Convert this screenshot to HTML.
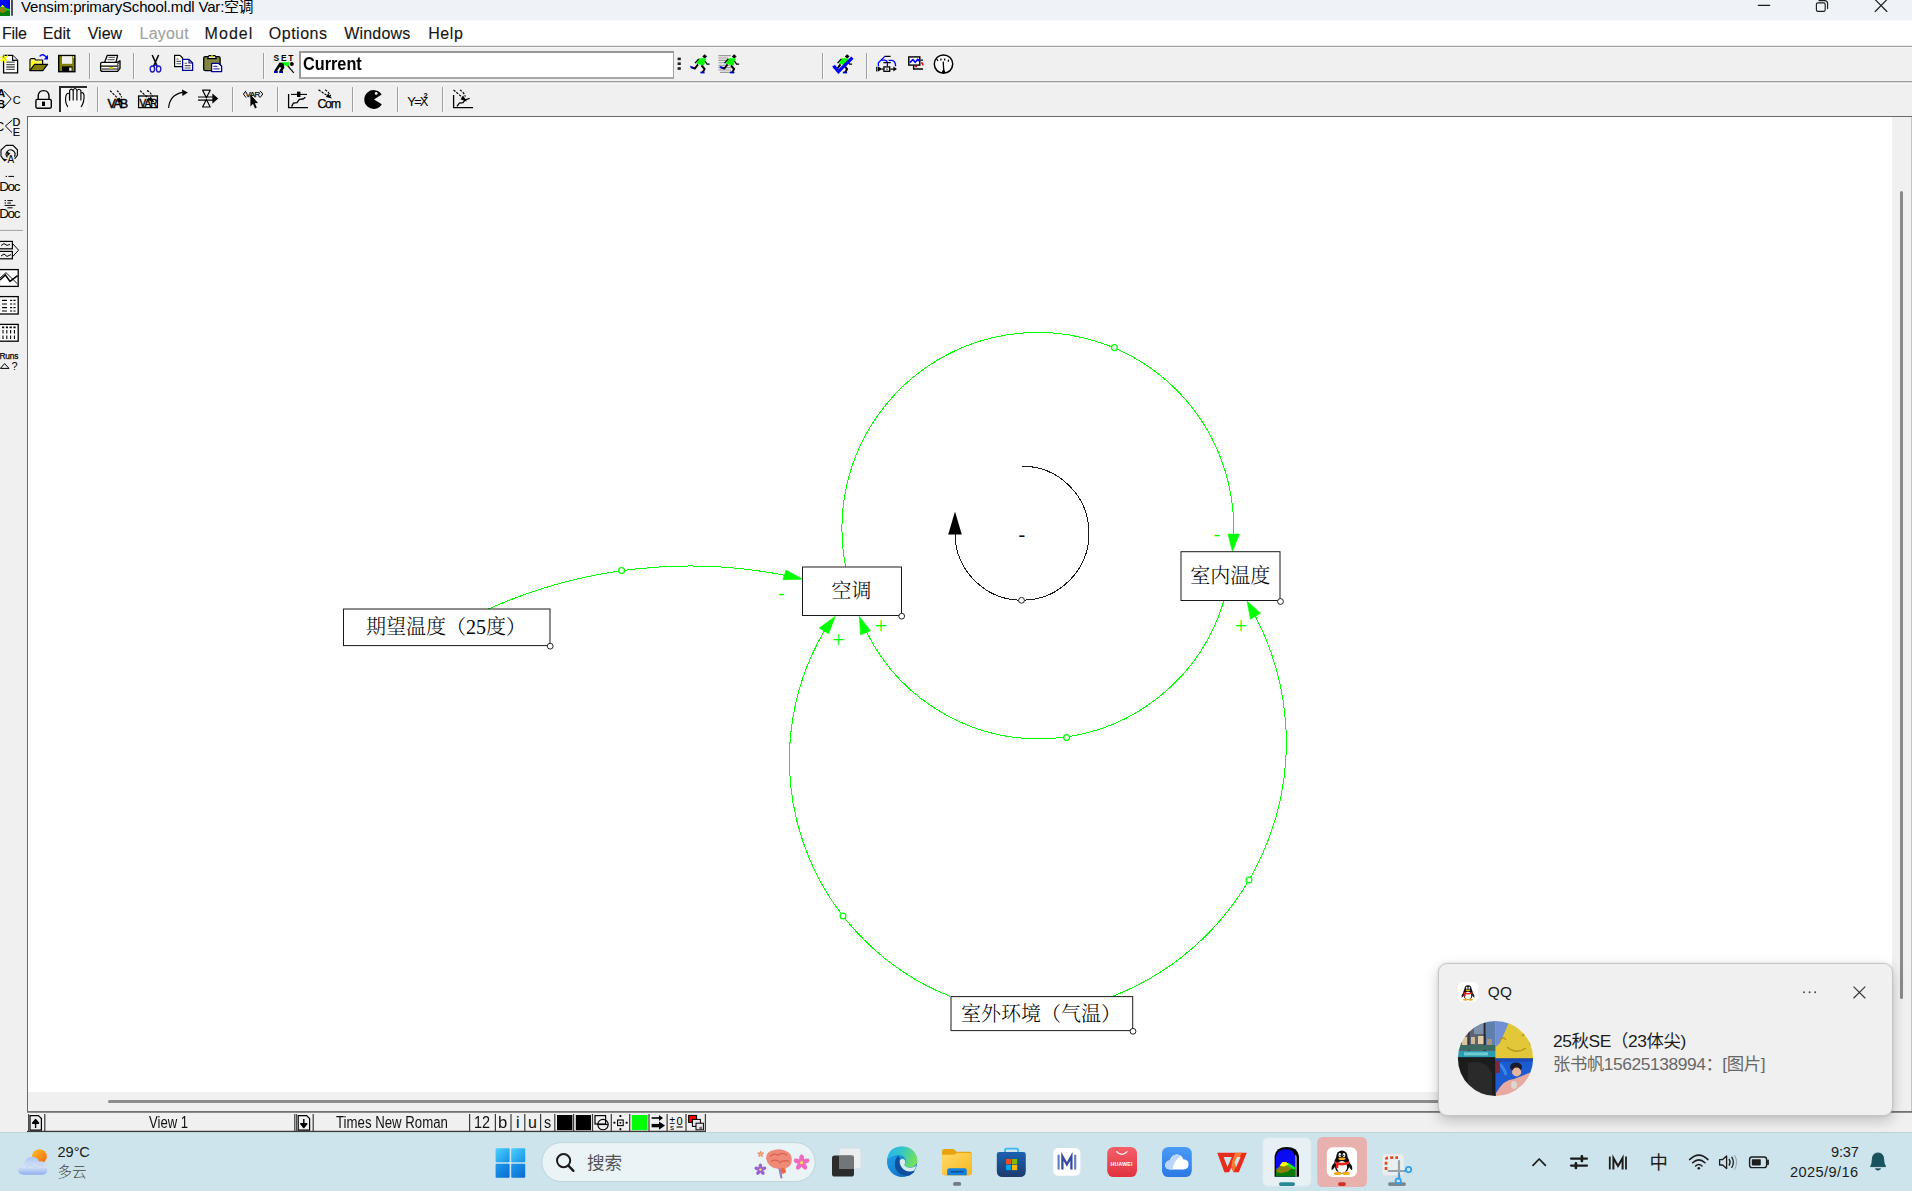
<!DOCTYPE html>
<html lang="zh">
<head>
<meta charset="utf-8">
<title>Vensim:primarySchool.mdl Var:空调</title>
<style>
*{box-sizing:border-box;margin:0;padding:0}
html,body{width:1912px;height:1191px;overflow:hidden;background:#f0f0f0}
body{position:relative;font-family:"Liberation Sans","Noto Sans CJK SC",sans-serif;color:#000}
div,span{position:absolute;white-space:nowrap}
svg{position:absolute;overflow:visible}
#title{left:0;top:0;width:1912px;height:20px;background:#eff3f8}
#title2{left:0;top:20px;width:1912px;height:1px;background:#f6f8fb}
.tt{left:21px;top:-2px;font-size:15px;line-height:18px;letter-spacing:-.17px;color:#000}
#menu{left:0;top:21px;width:1912px;height:24px;background:#fff}
#menu span{top:4px;font-size:16px;line-height:18px;color:#151515;-webkit-text-stroke:.12px #151515}
.hl{left:0;width:1912px;height:1px}
.sep{width:1px;background:#a0a0a0;box-shadow:1px 0 0 #fafafa}
#canvas{left:27px;top:116px;width:1865px;height:976px;background:#fff}
.sb span{font-size:16px;line-height:16px;top:1114.5px;color:#111;transform-origin:0 50%}
.sbsep{top:1114px;width:1px;height:17px;background:#404040}
#taskbar{left:0;top:1132px;width:1912px;height:59px;background:#cde4ec;border-top:1px solid #bed3da}
</style>
</head>

<body>
<div id="title"></div><div id="title2"></div>
<svg style="left:0px;top:0px" width="14" height="17" viewBox="0 0 14 17" ><rect x="0" y="0" width="10" height="16" fill="#0000ff"/>
<path d="M0 7.5 L2.5 5 L5 7.2 L7 8.5 L10 9.5 L10 16 L0 16Z" fill="#008000"/>
<path d="M0 7.2 L2.5 5.2 L4.8 7.2 L6.5 8.3 L10 9.2 L10 10.5 L6 9.8 L3 8.2 L0 8.4Z" fill="#00f000"/>
<path d="M0 7.6 L2.2 6.6 L4.5 8 L7 10.5 L5.5 11.8 L3 13 L0 12Z" fill="#8a8200"/>
<path d="M1 6.6 L2.5 5 L4.4 6.6 L3 7Z" fill="#ffff00"/>
<rect x="11" y="0" width="2" height="15.7" fill="#505050"/></svg>
<span class="tt">Vensim:primarySchool.mdl Var:</span><span class="tt" style="left:224px;letter-spacing:-.5px">空调</span>
<svg style="left:0px;top:0px" width="1912" height="21" viewBox="0 0 1912 21" ><g fill="none" stroke="#1b1b1b" stroke-width="1.15" stroke-linecap="round">
<path d="M1758.3 5.4H1769.7"/>
<rect x="1816.4" y="2.9" width="8.8" height="8.5" rx="1.6"/>
<path d="M1819 0.6H1824.6Q1827.6 0.6 1827.6 3.6V8.6" />
<path d="M1875.2 -0.4L1886.9 11.5M1886.9 -0.4L1875.2 11.5"/>
</g></svg>
<div id="menu"><span style="left:2px;letter-spacing:-0.3px;">File</span><span style="left:42.8px;letter-spacing:0.05px;">Edit</span><span style="left:87.7px;letter-spacing:0px;">View</span><span style="left:139.6px;letter-spacing:0.2px;color:#a2a2a2;-webkit-text-stroke:.12px #a2a2a2;">Layout</span><span style="left:204.6px;letter-spacing:1.05px;">Model</span><span style="left:268.8px;letter-spacing:0.5px;">Options</span><span style="left:344.2px;letter-spacing:0.2px;">Windows</span><span style="left:428.2px;letter-spacing:0.6px;">Help</span></div>
<div class="hl" style="top:45px;background:#ececec"></div>
<div class="hl" style="top:46px;background:#a0a0a0"></div>
<div class="hl" style="top:47px;background:#f8f8f8"></div>
<div class="hl" style="top:81px;background:#a0a0a0"></div>
<div class="hl" style="top:82px;background:#d8d8d8"></div>
<div class="hl" style="top:83px;background:#fafafa"></div>
<div class="sep" style="left:89px;top:53px;height:26px"></div>
<div class="sep" style="left:133px;top:53px;height:26px"></div>
<div class="sep" style="left:263px;top:53px;height:26px"></div>
<div class="sep" style="left:822px;top:53px;height:26px"></div>
<div class="sep" style="left:866px;top:53px;height:26px"></div>
<div class="sep" style="left:97px;top:87px;height:25px"></div>
<div class="sep" style="left:232px;top:87px;height:25px"></div>
<div class="sep" style="left:277px;top:87px;height:25px"></div>
<div class="sep" style="left:352px;top:87px;height:25px"></div>
<div class="sep" style="left:397px;top:87px;height:25px"></div>
<div class="sep" style="left:442px;top:87px;height:25px"></div>
<div style="left:299px;top:51px;width:375px;height:28px;background:#fff;border:2px solid #989898;border-bottom:2px solid #a8a8a8;border-right:1px solid #a4a4a4"></div>
<span style="left:303px;top:54px;font-size:17.6px;line-height:20px;font-weight:bold;transform:scaleX(.925);transform-origin:0 50%">Current</span>
<svg style="left:0px;top:46px" width="1000" height="36" viewBox="0 0 1000 36" >
<path d="M3.6 9.4H12.6L17.6 14.4V26.9H3.6Z" fill="#fff" stroke="#000" stroke-width="1.3" stroke-linejoin="round"/>
<path d="M12.6 9.4V14.4H17.6" fill="#f0f0f0" stroke="#000" stroke-width="1.1"/>
<path d="M6.3 16.2H14.8M6.3 18.6H14.8M6.3 21H14.8M6.3 23.4H14.8" stroke="#555" stroke-width="1.3"/>
<path d="M0 11L7.5 14.5M4 8.8L4.6 16.5M7.8 9.5L1.5 16M0.2 14.6L6 12" stroke="#ffff00" stroke-width="1.1"/>
<path d="M2 10.2L6 14.2" stroke="#c8c800" stroke-width=".8"/>

<path d="M30 24.4V13.6L31 12.6H34.6L35.6 14H42.6V18.2" fill="#ffff80" stroke="#000" stroke-width="1.2" stroke-linejoin="round"/>
<path d="M30.8 23.6L31 14L36.8 17.4L33 23.6Z" fill="#ffff00"/>
<path d="M37 16.4H41.6" stroke="#ffff00" stroke-width="1.6" stroke-dasharray="1.4 .8"/>
<path d="M29.8 24.6L34.6 18.4H47.6L42.8 24.6Z" fill="#808000" stroke="#000" stroke-width="1.2" stroke-linejoin="round"/>
<path d="M39.6 10.4Q43 6.6 46.6 11.4" fill="none" stroke="#0000ff" stroke-width="1.4"/>
<path d="M48 8.8V13.4H43.6Z" fill="#0000ff"/>

<rect x="58.7" y="9.5" width="16.2" height="16.2" fill="#808000" stroke="#000" stroke-width="1.4"/>
<rect x="62" y="10.2" width="10.2" height="7.6" fill="#f0f0f0"/>
<rect x="62" y="20.4" width="10.4" height="5" fill="#000"/>
<rect x="69.2" y="21.6" width="2.4" height="3.2" fill="#f0f0f0"/>
<rect x="73" y="10.4" width="1.1" height="1.4" fill="#fff"/>

<path d="M104.6 16.4L107.2 9.4H117.6L116 16.4" fill="#fff" stroke="#000" stroke-width="1.3" stroke-linejoin="round"/>
<path d="M108.4 11.4H115.2M107.6 13.6H114.6" stroke="#666" stroke-width="1.1"/>
<path d="M102 16.4H117.6L120 14.8V22.4L117.6 25.4H102.6Q100.6 25.4 100.6 23.4V18Q100.6 16.4 102 16.4Z" fill="#fff" stroke="#000" stroke-width="1.3" stroke-linejoin="round"/>
<path d="M101 20.2H118M101.6 23H117.6" stroke="#000" stroke-width="1.2"/>
<path d="M117.8 16.6V25M116.4 15L119.6 17.6M117 18.6L120 16.2M117 21L120 18.6M117 23.4L120 21" stroke="#444" stroke-width=".9"/>
<rect x="109.2" y="21" width="4" height="1.7" fill="#d0d000"/>

<path d="M152.2 9L157.4 20.6M158.6 9L153.4 20.6" stroke="#000" stroke-width="1.5" fill="none"/>
<ellipse cx="152.4" cy="23" rx="2.2" ry="3" fill="none" stroke="#2020c0" stroke-width="1.4"/>
<ellipse cx="158.6" cy="23" rx="2.2" ry="3" fill="none" stroke="#2020c0" stroke-width="1.4"/>
<path d="M154 20.4L155.4 18.4M157 20.4L155.6 18.4" stroke="#2020c0" stroke-width="1.2"/>

<path d="M174.6 9.4H180L182.6 12V20.6H174.6Z" fill="#fff" stroke="#000" stroke-width="1.2" stroke-linejoin="round"/>
<path d="M176.4 13H178.6M176.4 15.4H181M176.4 17.8H181" stroke="#555" stroke-width="1.1"/>
<path d="M182.6 13.4H189L192.6 17V24.4H182.6Z" fill="#fff" stroke="#000090" stroke-width="1.3" stroke-linejoin="round"/>
<path d="M189 13.4V17H192.6" fill="none" stroke="#000090" stroke-width="1.1"/>
<path d="M184.6 17.2H187.2M184.6 19.6H190.6M184.6 22H190.6" stroke="#555" stroke-width="1.1"/>

<rect x="203.7" y="10.6" width="16.4" height="14" rx="1.6" fill="#848444" stroke="#000" stroke-width="1.3"/>
<path d="M207.6 12.6L209 9.6H215L216.4 12.6Z" fill="#f0f0f0" stroke="#000" stroke-width="1.1" stroke-linejoin="round"/>
<path d="M210.4 10.8L212 9L213.6 10.8Z" fill="#ffff00" stroke="#a0a000" stroke-width=".5"/>
<path d="M211.6 17.4H218.6L221.6 20V25.6H211.6Z" fill="#fff" stroke="#000090" stroke-width="1.3" stroke-linejoin="round"/>
<path d="M213.4 20.4H217.4M213.4 22.8H219.6" stroke="#4040a0" stroke-width="1.2"/>

<text x="273.6" y="14.8" font-family="'Liberation Sans',sans-serif" font-size="8.4" font-weight="bold" letter-spacing="1.75" fill="#000">SET</text>
<path d="M280 16.2H289.6L288.6 20.6L284.6 19.6Z" fill="#00ff00"/>
<circle cx="291.8" cy="18" r="1.95" fill="#000"/>
<path d="M279.6 16.6L283.4 17.6L284.4 21.4L282.4 25H279.4L281.2 21.8L279.8 21L277 25H274.2Z" fill="#000"/>
<path d="M287.8 19.8L293.8 26.8" stroke="#000" stroke-width="1.2"/>
<path d="M274 25H277.8V27H274ZM279.2 25H283V27H279.2Z" fill="#0000a0"/>
<rect x="677.6" y="11.6" width="3.2" height="2.6" fill="#222"/><rect x="677.6" y="16.4" width="3.2" height="2.6" fill="#222"/><rect x="677.6" y="21.2" width="3.2" height="2.6" fill="#222"/><g transform="translate(0 0)">
<path d="M702.3 10.4L704.7 8.2L707.1 10.4L704.7 12.6Z" fill="#000"/>
<path d="M699.2 12.2H706.2L704 19.8L696.2 17.4Z" fill="#00ff00"/>
<path d="M698.8 12.8L695 17.2M705 15L707 18.2H709.6" fill="none" stroke="#000" stroke-width="1.25"/>
<path d="M698 18.4L694.8 22.6L691.8 21.4M701.4 19.4L704.6 23L702.6 26.4" fill="none" stroke="#000" stroke-width="1.9" stroke-linejoin="round"/>
<path d="M690 19.8L693.4 21L693.8 22.8L690.8 22.2Z" fill="#0000c0"/>
<path d="M700.4 25.6H704.6V27.4H700.4Z" fill="#0000c0"/></g><path d="M718.4 9.6H731M718.4 12H728M718.4 14.4H727M718.4 16.8H728M718.4 19.2H730M718.4 21.6H733M718.4 24H731M720 26.4H735" stroke="#9a9a9a" stroke-width="1.1"/><g transform="translate(29.5 0)">
<path d="M702.3 10.4L704.7 8.2L707.1 10.4L704.7 12.6Z" fill="#000"/>
<path d="M699.2 12.2H706.2L704 19.8L696.2 17.4Z" fill="#00ff00"/>
<path d="M698.8 12.8L695 17.2M705 15L707 18.2H709.6" fill="none" stroke="#000" stroke-width="1.25"/>
<path d="M698 18.4L694.8 22.6L691.8 21.4M701.4 19.4L704.6 23L702.6 26.4" fill="none" stroke="#000" stroke-width="1.9" stroke-linejoin="round"/>
<path d="M690 19.8L693.4 21L693.8 22.8L690.8 22.2Z" fill="#0000c0"/>
<path d="M700.4 25.6H704.6V27.4H700.4Z" fill="#0000c0"/></g><g transform="translate(142.5 0)">
<path d="M702.3 10.4L704.7 8.2L707.1 10.4L704.7 12.6Z" fill="#000"/>
<path d="M699.2 12.2H706.2L704 19.8L696.2 17.4Z" fill="#00ff00"/>
<path d="M698.8 12.8L695 17.2M705 15L707 18.2H709.6" fill="none" stroke="#000" stroke-width="1.25"/>
<path d="M698 18.4L694.8 22.6L691.8 21.4M701.4 19.4L704.6 23L702.6 26.4" fill="none" stroke="#000" stroke-width="1.9" stroke-linejoin="round"/>
<path d="M690 19.8L693.4 21L693.8 22.8L690.8 22.2Z" fill="#0000c0"/>
<path d="M700.4 25.6H704.6V27.4H700.4Z" fill="#0000c0"/></g><path d="M833.6 19.8L838.4 25.6L852.4 11.6" fill="none" stroke="#0000ff" stroke-width="3.2" stroke-linejoin="miter"/>
<path d="M884.8 10.4L878.4 16.8V20.2M881.6 14.2H884.4Q887.2 14.4 887.4 17V20.4M888.6 14.4H892Q895.6 15.2 895.6 20.2" fill="none" stroke="#0000ff" stroke-width="1.3"/>
<path d="M884.6 10.4H890.6M883.4 16.7H890.8" stroke="#000" stroke-width="1.2"/>
<rect x="883.9" y="20.9" width="5.8" height="4.4" fill="#f0f0f0" stroke="#000" stroke-width="1.3"/>
<rect x="886" y="22.6" width="1.8" height="1.2" fill="#555"/>
<path d="M876.8 20.8V25.4M890.4 23.1H895" stroke="#000" stroke-width="1.3"/>
<path d="M878 20.6L882.4 23.1L878 25.6ZM893.4 20.6L897 23.1L893.4 25.6Z" fill="#000"/>
<path d="M882 23.1H883.6" stroke="#000" stroke-width="1.2"/>

<rect x="908.8" y="10.9" width="11" height="8.2" fill="#fff" stroke="#000" stroke-width="1.4"/>
<path d="M909.6 16.6L913 13.6L915.2 16.2L917.6 13.4L919.4 15" fill="none" stroke="#0000ff" stroke-width="1.7"/>
<path d="M920.4 14.2H923M913.6 19.6V23H923" stroke="#000" stroke-width="1.3" fill="none"/>
<path d="M921.4 16.4Q923 18 923 19.6M914.6 20.5H917" stroke="#ff0000" stroke-width="1.5" fill="none"/>

<circle cx="943.5" cy="18.1" r="9.2" fill="#fff" stroke="#000" stroke-width="1.5"/>
<path d="M943.2 15.6L943.7 24" stroke="#000" stroke-width="1.3"/>
<path d="M941.2 27L943.6 22.4L946 27Z" fill="#000"/>
<path d="M940.9 12.6V14.6M944.7 12.6V14.6M948.6 13.6L948.2 15.6M936.8 13.2L938 15" stroke="#000" stroke-width="1.3"/>
</svg>
<svg style="left:0px;top:82px" width="480" height="34" viewBox="0 0 480 34" >
<text x="-2.4" y="15.2" font-family="'Liberation Sans',sans-serif" font-size="10.5" font-weight="bold" fill="#000">A</text>
<text x="-2.6" y="26.2" font-family="'Liberation Sans',sans-serif" font-size="10.5" font-weight="bold" fill="#000">B</text>
<path d="M4 9.2L11.2 17L2.6 26.6" fill="none" stroke="#000" stroke-width="1"/>
<text x="12.8" y="21.8" font-family="'Liberation Sans',sans-serif" font-size="11" fill="#000">C</text>

<path d="M38.2 17.4V14.6Q38.2 8.6 43.6 8.6Q49 8.6 49 14.6V17.4" fill="none" stroke="#000" stroke-width="1.4"/>
<rect x="35.9" y="17.4" width="15.4" height="8.8" rx="1.4" fill="#f0f0f0" stroke="#000" stroke-width="1.4"/>
<rect x="42" y="19.6" width="3" height="4.4" fill="#000"/>

<rect x="59" y="4" width="28.4" height="26" fill="#f8f8f8"/>
<path d="M60 30V5H87" fill="none" stroke="#2a2a2a" stroke-width="2"/>
<path d="M69.5 18.4V11.6Q67.4 10.4 66 13.4Q65.2 17 65.8 20.2Q66.4 23 67.8 24.8" fill="none" stroke="#000" stroke-width="1.15"/>
<path d="M69.6 18.4V8.6Q71.4 5.6 73.2 8.6V18.4M73.2 8.2Q75 4.8 76.9 8.2V18.4M76.9 8.6Q79 5.8 80.9 8.6V18.4M80.9 11Q83 9.4 84 13Q84.6 20 81 25" fill="none" stroke="#000" stroke-width="1.15"/>

<text x="107.4" y="26" font-family="'Liberation Sans',sans-serif" font-size="12.6" letter-spacing="-1.7" fill="#000" stroke="#000" stroke-width=".45">VAB</text>
<path d="M110 8.6L122 20.6M117 8.6Q120 11 121.6 15.4" fill="none" stroke="#000" stroke-width="1.2" stroke-dasharray="2.4 1.2"/>
<path d="M119.4 15.6L123.4 21.8L117 19Z" fill="#000"/>

<rect x="138.6" y="14" width="18.8" height="11.6" fill="none" stroke="#000" stroke-width="1.3"/>
<text x="139.6" y="24.6" font-family="'Liberation Sans',sans-serif" font-size="10" letter-spacing="-1" fill="#000" stroke="#000" stroke-width=".4">VAR</text>
<path d="M140 8.6L152.6 20M147 8.6Q150.6 10 152.4 14.6" fill="none" stroke="#000" stroke-width="1.2" stroke-dasharray="2.4 1.2"/>
<path d="M150.6 14.4L154.6 20.6L148.2 18Z" fill="#000"/>

<path d="M168.6 26Q169.6 13 182.4 10.4" fill="none" stroke="#000" stroke-width="1.1"/>
<path d="M182 7.4L188 10.6L182.4 14Z" fill="#000"/>

<path d="M202.6 8.2H210.2L206.4 15.8ZM206.4 17.4L210.2 25H202.6Z" fill="#f0f0f0" stroke="#000" stroke-width="1.2" stroke-linejoin="round"/>
<path d="M198 15H213M198 18.2H213" stroke="#000" stroke-width="1.2"/>
<path d="M212.4 11.4L218.2 16.6L212.4 21.8Z" fill="#000"/>

<text x="245.6" y="15.4" font-family="'Liberation Sans',sans-serif" font-size="8" letter-spacing="-.6" fill="#000" stroke="#000" stroke-width=".25">VAR</text>
<path d="M246 8.8L243.4 12L246 15.6M260 8.8L262.8 12L260 15.6" fill="none" stroke="#000" stroke-width="1"/>
<path d="M250.4 12.4V24.4L253 21.8L255 26.4L256.8 25.6L254.8 21.2L258 21Z" fill="#000"/>

<path d="M288.6 12V25.6H308" fill="none" stroke="#000" stroke-width="1.3"/>
<path d="M291 12.4H307" stroke="#000" stroke-width="1.1"/>
<rect x="297" y="9.6" width="3.4" height="5.4" fill="#000"/>
<path d="M291.6 24.6L293.4 21L297 20.6L299.4 17.4L303 17L305.4 15.2" fill="none" stroke="#000" stroke-width="1.3"/>

<text x="317.4" y="26" font-family="'Liberation Sans',sans-serif" font-size="12.4" letter-spacing="-1.25" fill="#000" stroke="#000" stroke-width=".25">Com</text>
<path d="M318.6 7.8L330 15.4M325 7.8Q329 10 330.6 14" fill="none" stroke="#000" stroke-width="1.2" stroke-dasharray="2.4 1.2"/>
<path d="M328.2 11.6L332 16.6L325.8 15Z" fill="#000"/>

<path d="M374 17.4L381.6 12.4A9.4 9.4 0 1 0 381.8 22.2Z" fill="#000"/>
<circle cx="376.2" cy="11.4" r="1.4" fill="#f0f0f0"/>

<text x="407.2" y="23.6" font-family="'Liberation Sans',sans-serif" font-size="13" letter-spacing="-1.9" fill="#000">Y=X</text>
<text x="423.6" y="16" font-family="'Liberation Sans',sans-serif" font-size="7.6" font-weight="bold" fill="#000">2</text>

<path d="M453.6 13V25.6H473" fill="none" stroke="#000" stroke-width="1.3"/>
<path d="M453.6 8L465 17.6M460 8Q463.6 10 465.4 14.6" fill="none" stroke="#000" stroke-width="1.2" stroke-dasharray="2.4 1.2"/>
<path d="M463 13.6L467 19.6L460.6 17.4Z" fill="#000"/>
<path d="M457 24.4L459.4 21L463 20.6L465 18L469.6 16.4" fill="none" stroke="#000" stroke-width="1.3"/>
</svg>
<div id="canvas"></div>
<div style="left:27px;top:116px;width:1885px;height:1px;background:#6a6a6a"></div>
<div style="left:27px;top:117px;width:1px;height:995px;background:#6a6a6a"></div>
<div style="left:1900px;top:191px;width:3px;height:808px;background:#8a8a8a;border-radius:1.5px"></div>
<div style="left:1911px;top:117px;width:1px;height:995px;background:#c4c4c4"></div>
<div style="left:108px;top:1100px;width:1785px;height:3px;background:#8c8c8c;border-radius:1.5px"></div>
<div style="left:27px;top:1111px;width:1885px;height:1px;background:#727272"></div>
<div style="left:27px;top:1112px;width:1885px;height:1px;background:#8c8c8c"></div>
<svg style="left:0px;top:116px" width="26" height="260" viewBox="0 0 26 260" >
<text x="-4.4" y="15.4" font-family="'Liberation Sans',sans-serif" font-size="12" fill="#000">C</text>
<path d="M12.4 4L5.4 10L12 16.6" fill="none" stroke="#000" stroke-width="1"/>
<text x="12.4" y="10" font-family="'Liberation Sans',sans-serif" font-size="10.8" fill="#000" stroke="#000" stroke-width=".2">D</text>
<text x="12.8" y="19.7" font-family="'Liberation Sans',sans-serif" font-size="10.8" fill="#000" stroke="#000" stroke-width=".2">E</text>

<path d="M6 29.4H13L17.4 33.8V39.4L14.6 42.8M3.4 43.4L1 40V34L6 29.4" fill="none" stroke="#000" stroke-width="1.1"/>
<path d="M7.4 41.4A4.4 4.4 0 1 1 14.4 40.6" fill="none" stroke="#000" stroke-width="1.1"/>
<path d="M7 35.6L10.4 37.6L7.4 40.6ZM2.6 42.6L7.6 43.6L4.2 45.6Z" fill="#000"/>
<text x="7.6" y="47.4" font-family="'Liberation Sans',sans-serif" font-size="10" fill="#000">A</text>

<path d="M5.6 60.4H7M8.4 60.4H14" stroke="#000" stroke-width="1"/>
<text x="-0.8" y="75" font-family="'Liberation Sans',sans-serif" font-size="13.4" letter-spacing="-1.3" fill="#000">Doc</text>

<path d="M4.6 84.6H6M7.4 84.6H12.8M4.6 87H6M7.4 87H11M4.6 89.4H15.4M7.4 91.8H12.6" stroke="#000" stroke-width="1"/>
<text x="-0.8" y="102.2" font-family="'Liberation Sans',sans-serif" font-size="13.4" letter-spacing="-1.3" fill="#000">Doc</text>
<path d="M0 114.4H23" stroke="#a0a0a0" stroke-width="1"/>

<rect x="-0.6" y="125.4" width="13" height="7.4" fill="none" stroke="#000" stroke-width="1.2"/>
<rect x="-0.6" y="135.4" width="13" height="7.4" fill="none" stroke="#000" stroke-width="1.2"/>
<path d="M1 129.6L4 127.6L7 129.4L10 128.4M1 140L4 138L7 140.4L11 138.6" fill="none" stroke="#000" stroke-width="1"/>
<path d="M12.6 127.6L18.6 134.2L12.6 140.6" fill="none" stroke="#000" stroke-width="1"/>

<rect x="-0.6" y="153.6" width="18.8" height="16.8" fill="#fff" stroke="#000" stroke-width="1.3"/>
<path d="M0 164L5.4 159L10 165.4L17.6 159.6" fill="none" stroke="#000" stroke-width="1.5"/>
<path d="M0 162L6 156.6L17.6 168" fill="none" stroke="#000" stroke-width=".9"/>

<rect x="-0.6" y="180.6" width="18.8" height="17.4" fill="#fff" stroke="#000" stroke-width="1.3"/>
<path d="M2 184.4H7M2 188H7M2 191.6H7M2 195H7" stroke="#000" stroke-width="1.2"/>
<path d="M10 184.4H16.6M10 188H16.6M10 191.6H16.6M10 195H16.6" stroke="#000" stroke-width="1.2" stroke-dasharray="2.2 1.2"/>

<rect x="-0.6" y="208.4" width="18.8" height="16.8" fill="#fff" stroke="#000" stroke-width="1.3"/>
<path d="M2 211.4H16.6" stroke="#000" stroke-width="1.8" stroke-dasharray="2.2 1.6"/>
<path d="M3 214V217.6M6.8 214V217.6M10.6 214V217.6M14.4 214V217.6M3 219.6V223M6.8 219.6V223M10.6 219.6V223M14.4 219.6V223" stroke="#000" stroke-width="1.1"/>

<text x="-0.6" y="243.2" font-family="'Liberation Sans',sans-serif" font-size="8.4" letter-spacing="-.2" fill="#000" stroke="#000" stroke-width=".25">Runs</text>
<path d="M0.4 252.4L4.6 247.6L9 252.4Z" fill="none" stroke="#000" stroke-width="1"/>
<text x="11.4" y="254" font-family="'Liberation Sans',sans-serif" font-size="11" fill="#000">?</text>
</svg>
<svg style="left:0px;top:1112px" width="720" height="20" viewBox="0 0 720 20" ><path d="M27 19.3H706" stroke="#3a3a3a" stroke-width="1.3"/><path d="M44.8 2V19.6" stroke="#3a3a3a" stroke-width="1.2"/><path d="M294.8 2V19.6" stroke="#3a3a3a" stroke-width="1.2"/><path d="M313.2 2V19.6" stroke="#3a3a3a" stroke-width="1.2"/><path d="M469.6 2V19.6" stroke="#3a3a3a" stroke-width="1.2"/><path d="M495.4 2V19.6" stroke="#3a3a3a" stroke-width="1.2"/><path d="M511 2V19.6" stroke="#3a3a3a" stroke-width="1.2"/><path d="M524.8 2V19.6" stroke="#3a3a3a" stroke-width="1.2"/><path d="M540.6 2V19.6" stroke="#3a3a3a" stroke-width="1.2"/><path d="M554.8 2V19.6" stroke="#3a3a3a" stroke-width="1.2"/><path d="M573.6 2V19.6" stroke="#3a3a3a" stroke-width="1.2"/><path d="M592.5 2V19.6" stroke="#3a3a3a" stroke-width="1.2"/><path d="M611.3 2V19.6" stroke="#3a3a3a" stroke-width="1.2"/><path d="M629.7 2V19.6" stroke="#3a3a3a" stroke-width="1.2"/><path d="M649 2V19.6" stroke="#3a3a3a" stroke-width="1.2"/><path d="M667.1 2V19.6" stroke="#3a3a3a" stroke-width="1.2"/><path d="M686 2V19.6" stroke="#3a3a3a" stroke-width="1.2"/><path d="M705.4 2V19.6" stroke="#3a3a3a" stroke-width="1.2"/>
<path d="M30 3.6H38.4L41.4 6.6V18.2H30Z" fill="#f0f0f0" stroke="#000" stroke-width="1.2"/>
<path d="M35.6 16V8.6M32.6 11.2L35.6 7.4L38.6 11.2Z" fill="#000" stroke="#000" stroke-width="1.4" stroke-linejoin="round"/>
<path d="M298.2 3.6H306.6L309.6 6.6V18.2H298.2Z" fill="#f0f0f0" stroke="#000" stroke-width="1.2"/>
<path d="M303.8 7V14.2M300.8 11.8L303.8 15.6L306.8 11.8Z" fill="#000" stroke="#000" stroke-width="1.4" stroke-linejoin="round"/>
<path d="M28.6 2V19M296.6 2V19" stroke="#3a3a3a" stroke-width="1"/>
<rect x="557" y="3" width="15.4" height="15.2" fill="#000"/><rect x="575.8" y="3" width="15.2" height="15.2" fill="#000"/><rect x="631.8" y="3" width="15.6" height="15.2" fill="#00ff00"/><rect x="595" y="3.6" width="10.6" height="8.4" fill="#f0f0f0" stroke="#000" stroke-width="1.2"/><circle cx="603" cy="12.6" r="5.2" fill="none" stroke="#000" stroke-width="1.1"/><path d="M597.6 12.6H608.4" stroke="#000" stroke-width="1"/><rect x="617.6" y="8" width="5.6" height="5.6" fill="none" stroke="#000" stroke-width="1.1"/><rect x="619.6" y="10" width="1.6" height="1.6" fill="#000"/>
<rect x="619.5" y="3" width="1.8" height="2" fill="#000"/><rect x="619.5" y="16.2" width="1.8" height="2" fill="#000"/><rect x="613.4" y="9.8" width="2" height="1.8" fill="#000"/><rect x="625.6" y="9.8" width="2" height="1.8" fill="#000"/><path d="M651.6 6H660" stroke="#000" stroke-width="1.6"/><path d="M659 3L663 6L659 9Z" fill="#000"/><path d="M651.6 13.6H660" stroke="#000" stroke-width="3.4"/><path d="M659 9.4L665 13.6L659 17.8Z" fill="#000"/><text x="669.4" y="11.6" font-family="'Liberation Sans',sans-serif" font-size="10" fill="#000">±</text><text x="676.6" y="12.6" font-family="'Liberation Sans',sans-serif" font-size="11" fill="#000">0</text><text x="670" y="18.4" font-family="'Liberation Sans',sans-serif" font-size="8" fill="#000">s</text><path d="M676.6 15H682.6" stroke="#000" stroke-width="1.1"/><rect x="688.6" y="3.4" width="8" height="7" fill="#ff0000" stroke="#000" stroke-width="1"/><rect x="692.4" y="7.4" width="8" height="7" fill="#e8e8e8" stroke="#000" stroke-width="1"/><rect x="696" y="11.2" width="7.4" height="6.6" fill="#e8e8e8" stroke="#000" stroke-width="1"/><rect x="699.4" y="14.8" width="2.6" height="2.4" fill="#666"/></svg>
<div class="sb"><span style="left:148.6px;transform:scaleX(.82)">View 1</span><span style="left:336px;transform:scaleX(.826)">Times New Roman</span><span style="left:474px;transform:scaleX(.9)">12</span><span style="left:498px;transform:scaleX(1.04)">b</span><span style="left:516px">i</span><span style="left:528px;transform:scaleX(1.0)">u</span><span style="left:544.4px;transform:scaleX(.9)">s</span></div>
<svg id="dg" width="1912" height="1191" viewBox="0 0 1912 1191" style="left:0;top:0">
<path d="M845.8 567.0A195.9 195.9 0 1 1 1233.6 536.0" fill="none" stroke="#00ff00" stroke-width="1" shape-rendering="crispEdges"/>
<polygon points="1232.4,551.6 1228,534.1 1239.4,534.1" fill="#00ff00" stroke="#00ff00" stroke-width="0.6" stroke-linejoin="miter"/>
<path d="M1224.0 600.5A192.8 192.8 0 0 1 866.5 632.0" fill="none" stroke="#00ff00" stroke-width="1" shape-rendering="crispEdges"/>
<polygon points="859.2,616.3 860.6,634.9 870.5,630.7" fill="#00ff00" stroke="#00ff00" stroke-width="0.6" stroke-linejoin="miter"/>
<path d="M950.5 996.5A254.6 254.6 0 0 1 824.3 631.0" fill="none" stroke="#00ff00" stroke-width="1" shape-rendering="crispEdges"/>
<polygon points="835.4,616.3 819.2,628.1 828.6,633.7" fill="#00ff00" stroke="#00ff00" stroke-width="0.6" stroke-linejoin="miter"/>
<path d="M1112.2 996.5A272.5 272.5 0 0 0 1255.5 616.5" fill="none" stroke="#00ff00" stroke-width="1" shape-rendering="crispEdges"/>
<polygon points="1247,601.1 1250.5,619.3 1260.5,613.2" fill="#00ff00" stroke="#00ff00" stroke-width="0.6" stroke-linejoin="miter"/>
<path d="M488.5 609.0A491.7 491.7 0 0 1 785.0 575.3" fill="none" stroke="#00ff00" stroke-width="1" shape-rendering="crispEdges"/>
<polygon points="802.6,579.2 786,570 782.9,579.7" fill="#00ff00" stroke="#00ff00" stroke-width="0.6" stroke-linejoin="miter"/>
<path d="M1021.8 466.2A67 67 0 1 1 955 533.5" fill="none" stroke="#1a1a1a" stroke-width="1" shape-rendering="crispEdges"/>
<polygon points="955,511.4 948.2,534.4 961.8,534.4" fill="#000"/>
<rect x="802.5" y="567" width="99" height="48.5" fill="#fff" stroke="#1a1a1a" stroke-width="1"/>
<rect x="1181" y="551.7" width="99" height="48.8" fill="#fff" stroke="#1a1a1a" stroke-width="1"/>
<rect x="343.5" y="609" width="206.5" height="36.6" fill="#fff" stroke="#1a1a1a" stroke-width="1"/>
<rect x="951" y="996.6" width="181.7" height="34" fill="#fff" stroke="#1a1a1a" stroke-width="1"/>
<text x="851.5" y="598" text-anchor="middle" font-family="'Liberation Serif','Noto Serif CJK SC',serif" font-size="20" font-weight="300" fill="#000">空调</text>
<text x="1230.2" y="582.5" text-anchor="middle" font-family="'Liberation Serif','Noto Serif CJK SC',serif" font-size="20" font-weight="300" fill="#000">室内温度</text>
<text x="446" y="634" text-anchor="middle" font-family="'Liberation Serif','Noto Serif CJK SC',serif" font-size="20" font-weight="300" fill="#000">期望温度（25度）</text>
<text x="1041" y="1020.5" text-anchor="middle" font-family="'Liberation Serif','Noto Serif CJK SC',serif" font-size="20" font-weight="300" fill="#000">室外环境（气温）</text>
<text x="838.5" y="646.5" font-family="'Liberation Serif',serif" font-size="23" fill="#00ff00" text-anchor="middle">+</text>
<text x="881" y="633" font-family="'Liberation Serif',serif" font-size="23" fill="#00ff00" text-anchor="middle">+</text>
<text x="1241.1" y="633" font-family="'Liberation Serif',serif" font-size="23" fill="#00ff00" text-anchor="middle">+</text>
<text x="781.4" y="599.4" font-family="'Liberation Serif',serif" font-size="19" fill="#00ff00" text-anchor="middle">-</text>
<text x="1217" y="540.4" font-family="'Liberation Serif',serif" font-size="19" fill="#00ff00" text-anchor="middle">-</text>
<text x="1021.8" y="541.3" font-family="'Liberation Serif',serif" font-size="20" fill="#111" text-anchor="middle">-</text>
<circle cx="901.7" cy="616.2" r="2.9" fill="#fff" stroke="#222" stroke-width="1"/>
<circle cx="1280.5" cy="601.5" r="2.9" fill="#fff" stroke="#222" stroke-width="1"/>
<circle cx="550.2" cy="646.2" r="2.9" fill="#fff" stroke="#222" stroke-width="1"/>
<circle cx="1133" cy="1031.3" r="2.9" fill="#fff" stroke="#222" stroke-width="1"/>
<circle cx="1021.5" cy="600.3" r="2.9" fill="#fff" stroke="#222" stroke-width="1"/>
<circle cx="1114.4" cy="347.6" r="2.9" fill="#fff" stroke="#00ff00" stroke-width="1.25"/>
<circle cx="1066.6" cy="737.4" r="2.9" fill="#fff" stroke="#00ff00" stroke-width="1.25"/>
<circle cx="843" cy="916" r="2.9" fill="#fff" stroke="#00ff00" stroke-width="1.25"/>
<circle cx="1249" cy="880" r="2.9" fill="#fff" stroke="#00ff00" stroke-width="1.25"/>
<circle cx="621.6" cy="570.5" r="2.9" fill="#fff" stroke="#00ff00" stroke-width="1.25"/>
</svg>
<div id="taskbar"></div>
<svg style="left:0px;top:1132px" width="1912" height="59" viewBox="0 0 1912 59" ><defs><linearGradient id="gsun" x1="0" y1="0" x2="1" y2="1"><stop offset="0" stop-color="#fbc02a"/><stop offset="1" stop-color="#f4650c"/></linearGradient><linearGradient id="gcl" x1="0" y1="0" x2="0" y2="1"><stop offset="0" stop-color="#a9c6f4"/><stop offset=".55" stop-color="#d6e2f6"/><stop offset="1" stop-color="#8eb0ee"/></linearGradient><linearGradient id="gw1" x1="0" y1="0" x2="1" y2="1"><stop offset="0" stop-color="#4fd0fb"/><stop offset="1" stop-color="#1392e6"/></linearGradient><linearGradient id="gw2" x1="0" y1="0" x2="1" y2="1"><stop offset="0" stop-color="#1f9cec"/><stop offset="1" stop-color="#0a6ad2"/></linearGradient><linearGradient id="gedge" x1="0" y1="0" x2="1" y2="1"><stop offset="0" stop-color="#2aa9ea"/><stop offset=".5" stop-color="#1586d8"/><stop offset="1" stop-color="#0c5cae"/></linearGradient><linearGradient id="gedge2" x1="0" y1="0" x2="1" y2=".3"><stop offset="0" stop-color="#2cb2ee"/><stop offset=".5" stop-color="#32c6c8"/><stop offset="1" stop-color="#6fe060"/></linearGradient><linearGradient id="gfold" x1="0" y1="0" x2="1" y2="1"><stop offset="0" stop-color="#ffd968"/><stop offset="1" stop-color="#f8b81c"/></linearGradient><linearGradient id="gstore" x1="0" y1="0" x2="0" y2="1"><stop offset="0" stop-color="#1a62b2"/><stop offset="1" stop-color="#1d3a6e"/></linearGradient><linearGradient id="ghw" x1="0" y1="0" x2="0" y2="1"><stop offset="0" stop-color="#f4606a"/><stop offset="1" stop-color="#e0323f"/></linearGradient><linearGradient id="gcloud" x1="0" y1="0" x2="0" y2="1"><stop offset="0" stop-color="#4a9bf5"/><stop offset="1" stop-color="#2b78e6"/></linearGradient></defs><g transform="translate(0 -6.8)"><circle cx="39.4" cy="31.4" r="7.4" fill="url(#gsun)"/><path d="M24 49.6Q18 49.6 18.2 44.4Q18.6 39.6 23.6 39.2Q25.6 31.4 33 31.6Q37.4 32 39.2 36.4Q42.4 35.4 45 37.6Q47.8 40 47.4 44Q47 49.6 42 49.6Z" fill="url(#gcl)"/><path d="M26 42Q31 37 35.6 43Q39 38 44 41" fill="none" stroke="#b7cdf3" stroke-width="1" opacity=".8"/></g><text x="57.6" y="25" font-family="'Liberation Sans','Noto Sans CJK SC',sans-serif" font-size="14.6" fill="#1a1a1a" letter-spacing="-.1">29°C</text><text x="57.4" y="44.6" font-family="'Liberation Sans','Noto Sans CJK SC',sans-serif" font-size="14.6" fill="#444" font-weight="300">多云</text><rect x="495.6" y="16.2" width="14" height="14" rx="1" fill="url(#gw1)"/><rect x="511.2" y="16.2" width="14" height="14" rx="1" fill="url(#gw1)"/><rect x="495.6" y="31.8" width="14" height="14" rx="1" fill="url(#gw2)"/><rect x="511.2" y="31.8" width="14" height="14" rx="1" fill="url(#gw2)"/><rect x="541.8" y="10.6" width="273.4" height="39" rx="19.5" fill="#eaf3f6" stroke="#bfd3da" stroke-width="1"/><circle cx="563.6" cy="28.6" r="6.6" fill="none" stroke="#1c1c1c" stroke-width="2"/><path d="M568.4 33.6L573.4 38.8" stroke="#1c1c1c" stroke-width="2.4" stroke-linecap="round"/><text x="587" y="36.6" font-family="'Liberation Sans','Noto Sans CJK SC',sans-serif" font-size="17.6" fill="#555">搜索</text><g transform="translate(0 2.4)"><path d="M766 24Q766 17 774 15.6Q782 13.6 788 17.6Q792.6 21 791.6 27Q791 32 786 33.6L784.6 38.6Q782 41.6 779.6 38L779 34.6Q768 33.6 766 24Z" fill="#f08a78"/><path d="M770 22Q774 18 778 21Q782 17 787 21M771 27Q776 24 780 28Q784 25 789 27" fill="none" stroke="#d9604f" stroke-width="1.2"/><path d="M779.6 34.6L781.4 43" stroke="#9a7fc8" stroke-width="2.2" stroke-linecap="round"/><path d="M782 33Q786 35 786 38Q783 39.4 780.6 36.6Z" fill="#f2622e"/></g><ellipse cx="801.6" cy="26.5" rx="2.4" ry="4.1" transform="rotate(0 801.6 26.5)" fill="#f06ac0"/><ellipse cx="805.5" cy="29.3" rx="2.4" ry="4.1" transform="rotate(72 805.5 29.3)" fill="#f06ac0"/><ellipse cx="804.0" cy="33.9" rx="2.4" ry="4.1" transform="rotate(144 804.0 33.9)" fill="#f06ac0"/><ellipse cx="799.2" cy="33.9" rx="2.4" ry="4.1" transform="rotate(216 799.2 33.9)" fill="#f06ac0"/><ellipse cx="797.7" cy="29.3" rx="2.4" ry="4.1" transform="rotate(288 797.7 29.3)" fill="#f06ac0"/><circle cx="801.6" cy="30.6" r="1.6" fill="#ffe14a"/><ellipse cx="760.4" cy="34.5" rx="1.8" ry="3.1" transform="rotate(0 760.4 34.5)" fill="#9a62d8"/><ellipse cx="763.3" cy="36.6" rx="1.8" ry="3.1" transform="rotate(72 763.3 36.6)" fill="#9a62d8"/><ellipse cx="762.2" cy="40.1" rx="1.8" ry="3.1" transform="rotate(144 762.2 40.1)" fill="#9a62d8"/><ellipse cx="758.6" cy="40.1" rx="1.8" ry="3.1" transform="rotate(216 758.6 40.1)" fill="#9a62d8"/><ellipse cx="757.5" cy="36.6" rx="1.8" ry="3.1" transform="rotate(288 757.5 36.6)" fill="#9a62d8"/><circle cx="760.4" cy="37.6" r="1.2" fill="#ffe14a"/><ellipse cx="760.6" cy="20.4" rx="1.0" ry="1.7" transform="rotate(0 760.6 20.4)" fill="#f4907a"/><ellipse cx="762.2" cy="21.5" rx="1.0" ry="1.7" transform="rotate(72 762.2 21.5)" fill="#f4907a"/><ellipse cx="761.6" cy="23.3" rx="1.0" ry="1.7" transform="rotate(144 761.6 23.3)" fill="#f4907a"/><ellipse cx="759.6" cy="23.3" rx="1.0" ry="1.7" transform="rotate(216 759.6 23.3)" fill="#f4907a"/><ellipse cx="759.0" cy="21.5" rx="1.0" ry="1.7" transform="rotate(288 759.0 21.5)" fill="#f4907a"/><circle cx="760.6" cy="22" r="0.7" fill="#ffd24a"/><rect x="839" y="16" width="22" height="21" rx="2.6" fill="#e9eef0" stroke="#d0d8dc" stroke-width=".8"/><rect x="832" y="23.6" width="22" height="21" rx="2.6" fill="#2c2c2c"/><rect x="839" y="23.6" width="15" height="13.4" fill="#8a8f92" opacity=".75"/><circle cx="902.1" cy="29.8" r="15.1" fill="url(#gedge)"/><path d="M887.2 27.4Q888.6 15.2 901.6 14.6Q914.6 14.6 917.2 27.2Q918 34.6 910.6 35.6Q904.6 35.8 904 32.4Q906.6 30.6 905.6 27.4Q903.4 22.4 897 23Q890.4 24 887.2 27.4Z" fill="url(#gedge2)"/><path d="M897.6 24Q893 30 896 37.6Q900 45 909.6 43.6Q913.6 42 915 38.6Q908.6 41 903.6 37.6Q898.6 33.6 899.6 28Q900.6 24.6 897.6 24Z" fill="#0f4f9e"/><path d="M899.8 28.6Q901.6 25.4 904.4 27.4Q906.4 30 904.2 32.6Q905 35.8 910.6 35.8Q914.6 35.6 916.4 33.6Q915.4 37 913.8 38.8Q907.6 40.6 903.4 37.2Q899.4 33.6 899.8 28.6Z" fill="#dbeaf0"/><path d="M942 19.4Q942 17 944.4 17H952.6Q953.8 17 954.8 18L956.6 19.8H969.4Q971.8 19.8 971.8 22.2V40.8Q971.8 43.2 969.4 43.2H944.4Q942 43.2 942 40.8Z" fill="#e9a30d"/><path d="M942 22.8H953.4Q954.6 22.8 955.6 22L956.8 21H969.4Q971.8 21 971.8 23.4V40.8Q971.8 43.2 969.4 43.2H944.4Q942 43.2 942 40.8Z" fill="url(#gfold)"/><path d="M947.2 43.2V38.4Q947.2 36.2 949.4 36.2H964.6Q966.8 36.2 966.8 38.4V43.2Z" fill="#1381da"/><rect x="950.4" y="39" width="13.2" height="1.5" rx=".7" fill="#0b4f9c"/><rect x="953" y="50" width="8.2" height="3.8" rx="1.9" fill="#717d82"/><path d="M1005 21V18.4Q1005 16.6 1006.8 16.6H1016.4Q1018.2 16.6 1018.2 18.4V21" fill="none" stroke="#3db7f5" stroke-width="1.9"/><path d="M996.8 22.4Q996.8 20 999.2 20H1023.4Q1025.8 20 1025.8 22.4V39Q1025.8 45 1019.8 45H1002.8Q996.8 45 996.8 39Z" fill="url(#gstore)"/><rect x="1006" y="27" width="5.2" height="5.2" fill="#f25022"/><rect x="1012" y="27" width="5.2" height="5.2" fill="#7fba00"/><rect x="1006" y="32.9" width="5.2" height="5.2" fill="#00a4ef"/><rect x="1012" y="32.9" width="5.2" height="5.2" fill="#ffb900"/><rect x="1053.2" y="16" width="27.2" height="27.8" rx="5" fill="#fdfdfe"/><path d="M1058.6 22.8V37.6" stroke="#5a7cc4" stroke-width="2.1"/><path d="M1062.4 37.6V24.4L1066.9 32.4L1071.4 24.4V37.6" fill="none" stroke="#3a4b9e" stroke-width="2.3" stroke-linejoin="miter"/><path d="M1075.2 22.8V37.6" stroke="#5a7cc4" stroke-width="2.1"/><rect x="1107.2" y="15" width="29.8" height="30" rx="6.4" fill="url(#ghw)"/><path d="M1116.4 19.4Q1121.8 25.4 1127.4 19.4" fill="none" stroke="#fff" stroke-width="1.2"/><text x="1121.6" y="33.6" font-family="'Liberation Sans','Noto Sans CJK SC',sans-serif" font-size="5.3" font-weight="bold" fill="#fff" text-anchor="middle" letter-spacing=".15">HUAWEI</text><rect x="1162" y="15" width="29.8" height="30" rx="6.4" fill="url(#gcloud)"/><path d="M1170.2 37.4Q1165 37.4 1165.2 32.8Q1165.8 28.8 1169.8 28.6Q1171.6 22.4 1177.4 22.6Q1181.8 23 1183.2 27.2Q1188.8 27.6 1188.6 32.8Q1188.2 37.4 1183.6 37.4Z" fill="#fdfeff"/><path d="M1170.2 37.4Q1165 37.4 1165.2 32.8Q1165.8 28.8 1169.8 28.6Q1171.6 22.4 1177.4 22.6Q1179.6 22.8 1181 24Q1174 28 1172.4 37.4Z" fill="#bcd6fb"/><path d="M1217.2 20.8H1246.8L1238.8 40.2H1233.4L1231.3 35.2L1229.2 40.2H1224.4Z" fill="#ea2c1c"/><path d="M1235.4 20.8H1241.6L1233.6 40.2L1231.3 35.2L1231.9 29.6Z" fill="#ff7a30"/><path d="M1223.6 25H1231.8L1227.5 35Z" fill="#cde4ec"/><path d="M1237 25H1240.6L1236.3 35L1234.5 30.8Z" fill="#cde4ec"/><rect x="1262.8" y="5.8" width="48.2" height="48.4" rx="5.4" fill="#e7f1f5" stroke="#dce9ee" stroke-width=".8"/><path d="M1274.6 44.8V24Q1276 15 1286.6 15Q1297.6 15 1299 24V44.8Z" fill="#050505"/><path d="M1276 44.8V24.6Q1277.4 17.2 1286 17.2Q1293.6 17.2 1295.2 24.6V44.8Z" fill="#0a0af4"/><path d="M1295.2 22.6Q1296.8 23.6 1296.8 26V44.8H1295.2Z" fill="#9a9a9a"/><path d="M1276 37.6L1284 30.6L1288.6 32L1295.2 36V44.8H1276Z" fill="#087a0c"/><path d="M1283.6 31.6L1288.8 31L1295.2 35.6V37.4L1289 36Z" fill="#10ee10"/><path d="M1276.4 37.4L1280.4 34L1287.6 33.4L1291.6 36.6L1288 39.6L1281 41.2L1276.4 40Z" fill="#8a8208"/><path d="M1279.6 33.8L1282.4 30L1286.4 30L1288.6 32.6L1284 34.4Z" fill="#fff800"/><rect x="1279" y="50.2" width="16" height="3.7" rx="1.85" fill="#2a8798"/><rect x="1317.2" y="5" width="49.8" height="50" rx="5.4" fill="#e9b1ad"/><rect x="1326.8" y="15.2" width="30.2" height="29.8" rx="6" fill="#fff"/><g transform="translate(1341.9 29.6) scale(1.08)"><ellipse cx="0" cy="2" rx="7.2" ry="9" fill="#0c0c0c"/><ellipse cx="0" cy="-4.6" rx="5.2" ry="5.6" fill="#0c0c0c"/><path d="M-7 1Q-10.4 4 -9.4 8Q-7.6 7 -6.4 4.6ZM7 1Q10.4 4 9.4 8Q7.6 7 6.4 4.6Z" fill="#0c0c0c"/><ellipse cx="0" cy="5" rx="4.8" ry="5.6" fill="#fff"/><path d="M-6.4 -0.4Q0 2.6 6.4 -0.4L6.6 2Q0 5 -6.6 2Z" fill="#e5261f"/><path d="M-5.4 1.6L-6 6.4L-3.4 6L-3 2.4Z" fill="#e5261f"/><ellipse cx="-1.9" cy="-6" rx="1.3" ry="1.9" fill="#fff"/><ellipse cx="1.9" cy="-6" rx="1.3" ry="1.9" fill="#fff"/><circle cx="-1.6" cy="-5.8" r=".6" fill="#000"/><circle cx="1.6" cy="-5.8" r=".6" fill="#000"/><ellipse cx="0" cy="-2.6" rx="3.4" ry="1.2" fill="#f7a910"/><ellipse cx="-4" cy="11" rx="3.4" ry="1.5" fill="#f7a910"/><ellipse cx="4" cy="11" rx="3.4" ry="1.5" fill="#f7a910"/></g><rect x="1338.1" y="50.2" width="7.8" height="3.7" rx="1.85" fill="#d03028"/><rect x="1388" y="50.2" width="18" height="3.7" rx="1.85" fill="#7c888e"/><rect x="1382.2" y="21.8" width="21.8" height="21.8" rx="3.4" fill="#e9eef0" stroke="#d5dde1" stroke-width=".5"/><path d="M1386 38V28Q1386 25.6 1388.4 25.6H1398" fill="none" stroke="#e4481e" stroke-width="2.6" stroke-dasharray="3 2.2"/><path d="M1399 29V47M1388.6 39H1404" stroke="#99a3aa" stroke-width="2.2" stroke-linecap="round"/><path d="M1399.6 46.6L1399 41M1404 39L1406 38.6" stroke="#3a98e8" stroke-width="1.6"/><circle cx="1408.6" cy="37.6" r="2.7" fill="none" stroke="#2f9df0" stroke-width="1.7"/><circle cx="1398.2" cy="49" r="2.7" fill="none" stroke="#2f9df0" stroke-width="1.7"/><path d="M1533 33.4L1539.2 27L1545.4 33.4" fill="none" stroke="#1c1c1c" stroke-width="1.7" stroke-linecap="round" stroke-linejoin="round"/><path d="M1571 26.6H1587M1571 33.6H1587" stroke="#1c1c1c" stroke-width="2.2" stroke-linecap="round"/><rect x="1580.6" y="23" width="2.6" height="7.2" rx="1" fill="#1c1c1c"/><rect x="1574.6" y="30" width="2.6" height="7.2" rx="1" fill="#1c1c1c"/><path d="M1609.8 24.6V37.4" stroke="#1c1c1c" stroke-width="1.8"/><path d="M1613.4 37.4V26L1618 34L1622.6 26V37.4" fill="none" stroke="#1c1c1c" stroke-width="2"/><path d="M1626 24.6V37.4" stroke="#1c1c1c" stroke-width="1.8"/><text x="1649.4" y="37.4" font-family="'Liberation Sans','Noto Sans CJK SC',sans-serif" font-size="18.4" fill="#1c1c1c">中</text><path d="M1689.6 27.6Q1698.8 18.6 1708 27.6" fill="none" stroke="#1c1c1c" stroke-width="1.5" stroke-linecap="round"/><path d="M1692.6 30.8Q1698.8 25 1705 30.8" fill="none" stroke="#1c1c1c" stroke-width="1.5" stroke-linecap="round"/><path d="M1695.6 34Q1698.8 31 1702 34" fill="none" stroke="#1c1c1c" stroke-width="1.5" stroke-linecap="round"/><circle cx="1698.8" cy="36.2" r="1.3" fill="#1c1c1c"/><path d="M1719.6 27.6H1722.6L1726.6 24V36.6L1722.6 33H1719.6Z" fill="none" stroke="#1c1c1c" stroke-width="1.3" stroke-linejoin="round"/><path d="M1729.2 27.4Q1731 30.3 1729.2 33.2M1731.8 25.2Q1735 30.3 1731.8 35.4" fill="none" stroke="#1c1c1c" stroke-width="1.3" stroke-linecap="round"/><path d="M1734.6 23.4Q1738.6 30.3 1734.6 37.2" fill="none" stroke="#9aa" stroke-width="1.1" stroke-linecap="round"/><rect x="1749.6" y="25" width="17" height="10.6" rx="2.4" fill="none" stroke="#1c1c1c" stroke-width="1.4"/><rect x="1751.8" y="27.2" width="9" height="6.2" rx=".8" fill="#1c1c1c"/><path d="M1768 28.4V32.2" stroke="#1c1c1c" stroke-width="1.8" stroke-linecap="round"/><text x="1858.6" y="25.2" font-family="'Liberation Sans','Noto Sans CJK SC',sans-serif" font-size="14.6" fill="#1c1c1c" text-anchor="end" letter-spacing="-.2">9:37</text><text x="1858.6" y="45" font-family="'Liberation Sans','Noto Sans CJK SC',sans-serif" font-size="14.6" fill="#1c1c1c" text-anchor="end" letter-spacing=".42">2025/9/16</text><path d="M1870.6 34.6Q1872.4 32 1872.4 27Q1872.6 21 1878 21Q1883.4 21 1883.6 27Q1883.6 32 1885.6 34.6Z" fill="#17525d" stroke="#17525d" stroke-width="1" stroke-linejoin="round"/><path d="M1875.4 36.8Q1878 39.8 1880.6 36.8Z" fill="#17525d" stroke="#17525d" stroke-width=".8"/></svg>
<div style="left:1438px;top:963px;width:455px;height:152.5px;background:#f0f0f0;border-radius:9px;border:1px solid #c6c6c6;box-shadow:0 5px 14px rgba(0,0,0,.20),0 0 3px rgba(0,0,0,.10)"></div>
<svg style="left:1438px;top:963px" width="456" height="154" viewBox="0 0 456 154" ><defs><clipPath id="av"><circle cx="57.5" cy="95.5" r="37.6"/></clipPath><filter id="avb" x="-10%" y="-10%" width="120%" height="120%"><feGaussianBlur stdDeviation=".55"/></filter></defs><rect x="20" y="19.2" width="20" height="19.4" rx="4" fill="#fff"/><g transform="translate(30 29.2) scale(0.68)"><ellipse cx="0" cy="2" rx="7.2" ry="9" fill="#0c0c0c"/><ellipse cx="0" cy="-4.6" rx="5.2" ry="5.6" fill="#0c0c0c"/><path d="M-7 1Q-10.4 4 -9.4 8Q-7.6 7 -6.4 4.6ZM7 1Q10.4 4 9.4 8Q7.6 7 6.4 4.6Z" fill="#0c0c0c"/><ellipse cx="0" cy="5" rx="4.8" ry="5.6" fill="#fff"/><path d="M-6.4 -0.4Q0 2.6 6.4 -0.4L6.6 2Q0 5 -6.6 2Z" fill="#e5261f"/><path d="M-5.4 1.6L-6 6.4L-3.4 6L-3 2.4Z" fill="#e5261f"/><ellipse cx="-1.9" cy="-6" rx="1.3" ry="1.9" fill="#fff"/><ellipse cx="1.9" cy="-6" rx="1.3" ry="1.9" fill="#fff"/><circle cx="-1.6" cy="-5.8" r=".6" fill="#000"/><circle cx="1.6" cy="-5.8" r=".6" fill="#000"/><ellipse cx="0" cy="-2.6" rx="3.4" ry="1.2" fill="#f7a910"/><ellipse cx="-4" cy="11" rx="3.4" ry="1.5" fill="#f7a910"/><ellipse cx="4" cy="11" rx="3.4" ry="1.5" fill="#f7a910"/></g><text x="49.8" y="34.2" font-family="'Liberation Sans','Noto Sans CJK SC',sans-serif" font-size="15.4" fill="#1a1a1a" letter-spacing=".2">QQ</text><circle cx="366" cy="29.2" r=".95" fill="#444"/><circle cx="371.6" cy="29.2" r=".95" fill="#444"/><circle cx="377.2" cy="29.2" r=".95" fill="#444"/><path d="M415.8 23.8L427 35M427 23.8L415.8 35" stroke="#333" stroke-width="1.1" stroke-linecap="round"/><g clip-path="url(#av)"><g filter="url(#avb)"><rect x="19" y="57" width="78" height="78" fill="#1d1d1f"/><rect x="19" y="57" width="39" height="32" fill="#5d6470"/><rect x="36" y="57" width="12" height="14" fill="#7d90ae"/><rect x="48" y="57" width="10" height="30" fill="#5f7fae"/><rect x="24" y="74" width="5" height="8" fill="#d9c7a0"/><rect x="33" y="74" width="4" height="7" fill="#cdb98f"/><rect x="40" y="73" width="6" height="8" fill="#e0cda6"/><rect x="49" y="76" width="5" height="6" fill="#a89478"/><rect x="45.6" y="58" width="2" height="30" fill="#2a2a2e"/><rect x="30" y="64" width="1.6" height="24" fill="#34343a"/><rect x="19" y="82" width="39" height="5" fill="#3b6d62"/><rect x="19" y="88" width="39" height="6.4" fill="#2b9eb0"/><rect x="26" y="89.4" width="24" height="3" fill="#8fe0e0" opacity=".7"/><rect x="19" y="94.4" width="39" height="41" fill="#1b1b1d"/><path d="M30 100Q48 96 54 110V134H30Z" fill="#2a2a2c"/><rect x="57.4" y="57" width="40" height="38.6" fill="#e2c737"/><path d="M57.4 57H72L62 80L57.4 84Z" fill="#6f8fd6"/><path d="M62 78Q64.6 72 68 77M84 73Q87.6 69 90.6 73M69 84Q78 92 88 85" fill="none" stroke="#b59420" stroke-width="1.3"/><circle cx="95" cy="79" r="3.6" fill="none" stroke="#b59420" stroke-width="1.2"/><rect x="57.4" y="95.6" width="40" height="40" fill="#1c5bd0"/><rect x="57.4" y="95.6" width="40" height="3" fill="#1b49b6"/><ellipse cx="78" cy="104" rx="6" ry="4.6" fill="#1a1a2a"/><ellipse cx="78.6" cy="109" rx="4.6" ry="4.4" fill="#e9b49c"/><path d="M58 130Q66 116 76 116Q86 112 96 108V120Q84 124 78 134H58Z" fill="#e8a9a0"/><path d="M60 100Q66 104 68 112" stroke="#3b86e8" stroke-width="3" fill="none"/><rect x="58" y="98" width="4" height="12" fill="#7a2a3a"/><ellipse cx="76" cy="122" rx="3" ry="4" fill="#d8d8d0"/></g></g><text x="115" y="84" font-family="'Liberation Sans','Noto Sans CJK SC',sans-serif" font-size="17.4" fill="#1c1c1c" letter-spacing="-.4">25秋SE（23体尖)</text><text x="115" y="106.8" font-family="'Liberation Sans','Noto Sans CJK SC',sans-serif" font-size="17.4" fill="#686868" letter-spacing="-.44">张书帆15625138994：[图片]</text></svg>
</body>
</html>
